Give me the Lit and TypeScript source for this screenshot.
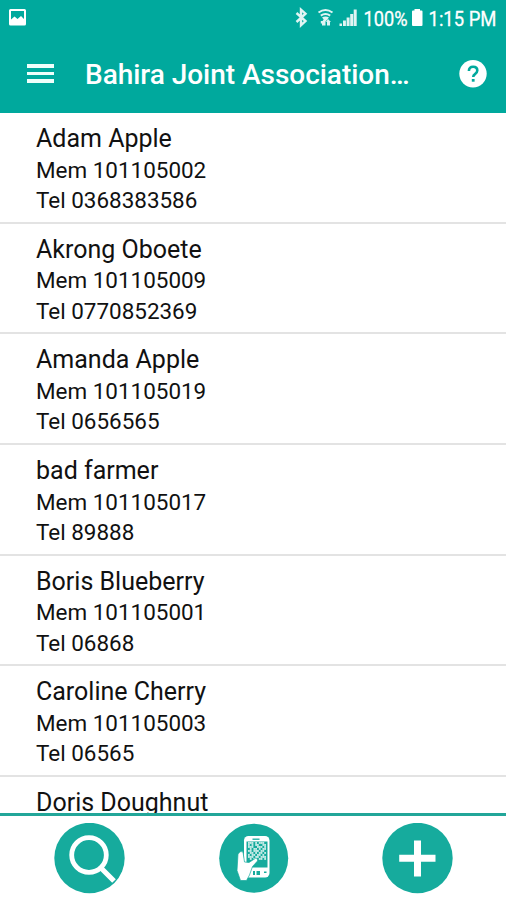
import { LitElement, html, css, svg, nothing } from "lit";
import { customElement, property } from "lit/decorators.js";

interface Member { name: string; mem?: string; tel?: string; }

const MEMBERS: Member[] = [
  { name: "Adam Apple", mem: "101105002", tel: "0368383586" },
  { name: "Akrong Oboete", mem: "101105009", tel: "0770852369" },
  { name: "Amanda Apple", mem: "101105019", tel: "0656565" },
  { name: "bad farmer", mem: "101105017", tel: "89888" },
  { name: "Boris Blueberry", mem: "101105001", tel: "06868" },
  { name: "Caroline Cherry", mem: "101105003", tel: "06565" },
  { name: "Doris Doughnut" },
];

@customElement("status-bar")
class StatusBar extends LitElement {
  static styles = css`
    :host { display: flex; height: 36px; align-items: stretch; justify-content: space-between; }
    svg { display: block; height: 36px; fill: #fff; }
    text { font: 400 21px Roboto, sans-serif; stroke: #fff; stroke-width: 0.3px; }
    .line { fill: none; stroke: #fff; }
    .soft { opacity: 0.88; }
  `;
  render() {
    return html`
      <svg width="40" viewBox="0 0 40 36">
        <path fill-rule="evenodd" d="M10.500 9h14q1.500 0 1.500 1.500v13.500q0 1.500-1.500 1.500h-14q-1.500 0-1.500-1.500v-13.500q0-1.500 1.500-1.500zM11 11v8.500l3.500-3 3 2.500 3.500-3 3 3v-8z"/>
      </svg>
      <svg width="226" viewBox="280 0 226 36">
        <path class="line soft" stroke-width="2.400" d="M296.500 13l9 8-4.500 4.300v-15.600l4.500 4-9 8.300"/>
        <g class="soft">
          <path class="line" stroke-width="2" d="M318.500 12.500q7-5 14 0M320.800 15.600q4.700-3.200 9.400 0"/>
          <path d="M322 17.500q3.500-2 7 0l-3.500 4zM320.800 21h1.700l1.500-2 1.500 2v4.500h-3.500v-2h-1.200zM327 25.500v-3.500h-1l2-3 3 3h-1v3.500z"/>
          <path d="M339.500 23.500h2.500v2.500h-2.500zM343 20.500h2.900v5.500h-2.900zM346.600 17.500h3v8.500h-3zM350.200 14h3v12h-3zM353.700 9.500h3v16.500h-3z"/>
        </g>
        <text x="363.500" y="25.500" textLength="44" lengthAdjust="spacingAndGlyphs">100%</text>
        <path d="M414.500 9h5.500v1.500h1.500q1 0 1 1v13.500q0 1-1 1h-8.500q-1 0-1-1v-13.500q0-1 1-1h1.500z"/>
        <text x="428.500" y="25.500" textLength="68" lengthAdjust="spacingAndGlyphs">1:15 PM</text>
      </svg>`;
  }
}

@customElement("title-bar")
class TitleBar extends LitElement {
  static styles = css`
    :host { display: flex; align-items: center; height: 76px; padding: 0 19px 0 26.500px; color: #fff; }
    .menu { display: flex; flex-direction: column; gap: 4px; width: 27px; padding-bottom: 1px; }
    .menu i { height: 3.700px; background: #effffb; }
    h1 { flex: 1; margin: 0 0 0 31.500px; padding-top: 2px; font: 500 28px/76px Roboto, sans-serif; letter-spacing: -0.030px; white-space: nowrap; }
    svg { display: block; }
  `;
  render() {
    return html`
      <div class="menu"><i></i><i></i><i></i></div>
      <h1>Bahira Joint Association…</h1>
      <svg width="28" height="28" viewBox="0 0 28 28">
        <circle cx="14" cy="13.700" r="13.700" fill="#fff"/>
        <path d="M9.900 11.100q0-4.300 4.200-4.300t4.200 3.800q0 2-2.300 3.500-1.800 1.200-1.800 3" fill="none" stroke="#00a99d" stroke-width="2.600"/>
        <rect x="12.800" y="19" width="2.800" height="2.700" fill="#00a99d"/>
      </svg>`;
  }
}

@customElement("member-row")
class MemberRow extends LitElement {
  @property({ attribute: false }) member!: Member;
  static styles = css`
    :host { display: block; box-sizing: border-box; flex: none; height: 110.700px; padding: 9px 36px 0; border-bottom: 2px solid #e3e3e3; color: #111; white-space: nowrap; }
    .name { font-size: 25px; line-height: 34px; height: 32.500px; }
    .info { font-size: 22.450px; line-height: 30.500px; }
  `;
  render() {
    const { name, mem, tel } = this.member;
    return html`
      <div class="name">${name}</div>
      ${mem ? html`<div class="info">Mem ${mem}</div>` : nothing}
      ${tel ? html`<div class="info">Tel ${tel}</div>` : nothing}`;
  }
}

@customElement("action-bar")
class ActionBar extends LitElement {
  static styles = css`
    :host { display: flex; box-sizing: border-box; height: 87px; flex: none; padding: 7px 53px 0 54px; justify-content: space-between; align-items: flex-start; border-top: 3px solid #22a699; background: #fff; }
    svg { display: block; }
    .disc, .teal { fill: #16ab9d; }
    .white { fill: #fff; }
    .line { fill: none; stroke: #fff; }
    .slot { fill: none; stroke: #16ab9d; }
  `;

  private code() {
    const rows = ["1110101110", "1010110011", "1110011101", "0101101011", "1101110110", "0110101101", "1011011010", "1110110111", "0101101101"];
    return rows.flatMap((r, y) => [...r].map((c, x) => c === "1"
      ? svg`<rect x=${30 + x * 1.8} y=${19 + y * 2} width="1.8" height="1.9" fill="#fff" opacity="0.75"/>` : null));
  }

  render() {
    return html`
      <svg width="71" height="71" viewBox="0 0 71 71">
        <circle class="disc" cx="35.500" cy="35" r="35.200"/>
        <circle class="line" cx="35" cy="32" r="17.300" stroke-width="4.800"/>
        <path class="line" stroke-width="5.200" d="M46.500 44.500l13.500 13.500"/>
      </svg>
      <svg width="71" height="71" viewBox="0 0 71 71">
        <circle class="disc" cx="35.700" cy="35.200" r="34.500"/>
        <rect class="white" x="26" y="13" width="25.500" height="41.500" rx="4.500"/>
        <rect class="teal" x="28.500" y="18.500" width="21" height="26"/>
        ${this.code()}
        <path class="slot" stroke-width="1.300" d="M34.500 16.200h7"/>
        <g class="teal"><rect x="35" y="48" width="2" height="4"/><rect x="38.500" y="48" width="3.500" height="4"/><rect x="46" y="48.500" width="2.500" height="1.500"/></g>
        <path d="M20 31q3-4 5-2l1.500 10 4.500.5 6.500-4.200q3 0 2 2.700l-5 5.500-3 8.500-3 5.500h-6l-3.500-10z" fill="#fff" stroke="#16ab9d" stroke-width="0.700"/>
      </svg>
      <svg width="71" height="71" viewBox="0 0 71 71">
        <circle class="disc" cx="35.500" cy="35" r="35.200"/>
        <path class="line" stroke-width="7" d="M35.500 17.500v36M17.200 35.200h36.300"/>
      </svg>`;
  }
}

@customElement("app-root")
class AppRoot extends LitElement {
  static styles = css`
    :host { display: flex; flex-direction: column; width: 506px; height: 900px; overflow: hidden; background: #fff; font-family: Roboto, sans-serif; }
    header { height: 113px; flex: none; background: #00a99d; }
    main { flex: 1; min-height: 0; overflow: hidden; display: flex; flex-direction: column; }
  `;
  render() {
    return html`
      <header><status-bar></status-bar><title-bar></title-bar></header>
      <main>${MEMBERS.map((m) => html`<member-row .member=${m}></member-row>`)}</main>
      <action-bar></action-bar>`;
  }
}
